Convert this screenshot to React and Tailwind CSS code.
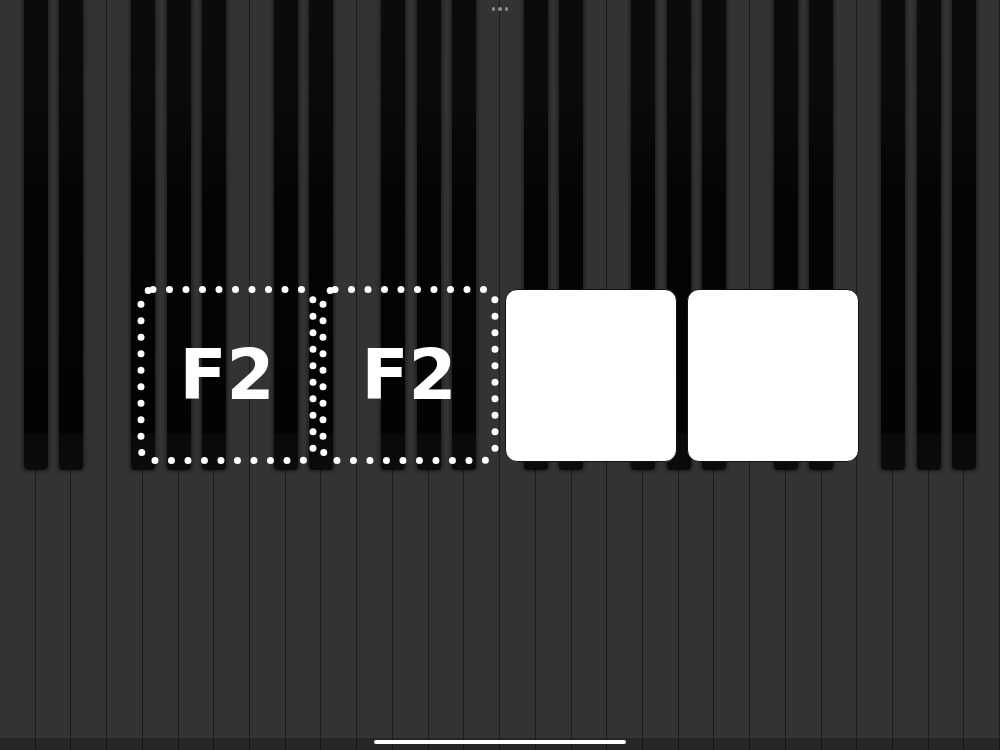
import React from 'react';

const WHITE_COUNT = 28;
const KEY_W = 1000 / WHITE_COUNT;

// black keys sit on the C|D, D|E, F|G, G|A, A|B boundaries of each octave
const blackKeys = [];
for (let o = 0; o < 4; o++) {
  [1, 2, 4, 5, 6].forEach((b) => blackKeys.push(o * 7 + b));
}

function DottedCard({ label }) {
  return (
    <div className="relative w-[172px] h-[173px] flex items-center justify-center">
      <svg className="absolute inset-0 overflow-visible" width="172" height="173" viewBox="0 0 172 173">
        <rect
          x="0"
          y="0.5"
          width="172"
          height="171"
          rx="12"
          fill="none"
          stroke="#ffffff"
          strokeWidth="7"
          strokeLinecap="round"
          strokeDasharray="0 16.5"
        />
      </svg>
      <span className="relative text-white text-[69px] font-bold leading-none font-['DejaVu_Sans',sans-serif]">
        {label}
      </span>
    </div>
  );
}

function BlankCard() {
  return <div className="w-[172px] h-[173px] bg-white rounded-[12px] border-[1.5px] border-[#111]" />;
}

export default function App() {
  return (
    <div className="relative w-full h-[750px] bg-[#333333] overflow-hidden">
      {/* white keys */}
      <div className="flex h-full">
        {Array.from({ length: WHITE_COUNT }).map((_, i) => (
          <div key={i} className="flex-1 h-full border-r-[1.5px] border-[#1c1c1c] bg-[#333333]" />
        ))}
      </div>

      {/* black keys */}
      {blackKeys.map((b) => (
        <div
          key={b}
          className="absolute top-0 w-[24px] h-[470px] rounded-b-[4px] bg-[linear-gradient(to_bottom,#0b0b0b_0%,#0a0a0a_22%,#040404_45%,#030303_92%,#0a0a0a_92.5%,#0b0b0b_100%)] shadow-[0_0_3px_2px_rgba(0,0,0,0.35)]"
          style={{ left: b * KEY_W - 12 }}
        />
      ))}

      {/* dark strip at the bottom */}
      <div className="absolute left-0 right-0 bottom-0 h-[12px] bg-black/25" />

      {/* top handle */}
      <div className="absolute top-[7px] left-0 right-0 flex justify-center gap-[3px]">
        <div className="w-[3.5px] h-[3.5px] rounded-full bg-[#8f8f8f]" />
        <div className="w-[3.5px] h-[3.5px] rounded-full bg-[#8f8f8f]" />
        <div className="w-[3.5px] h-[3.5px] rounded-full bg-[#8f8f8f]" />
      </div>

      {/* answer cards */}
      <div className="absolute inset-0 flex items-center justify-center gap-[10px]">
        <DottedCard label="F2" />
        <DottedCard label="F2" />
        <BlankCard />
        <BlankCard />
      </div>

      {/* home indicator */}
      <div className="absolute bottom-[6px] left-0 right-0 flex justify-center">
        <div className="w-[252px] h-[4px] rounded-full bg-white" />
      </div>
    </div>
  );
}
